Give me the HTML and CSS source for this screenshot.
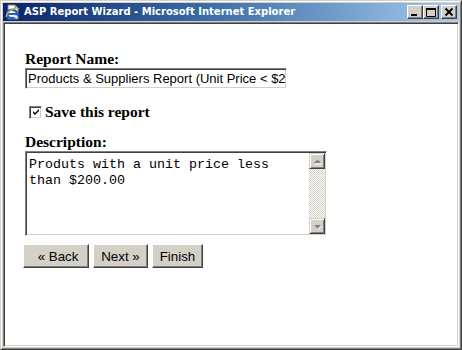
FILE: index.html
```html
<!DOCTYPE html>
<html>
<head>
<meta charset="utf-8">
<title>ASP Report Wizard</title>
<link rel="stylesheet" href="styles.css">
</head>
<body>
<div class="window">
  <div class="frame">
    <div class="titlebar">
      <svg class="ie-icon" width="16" height="16" viewBox="0 0 16 16">
        <path d="M3 1 H10 L13 4 V15 H3 Z" fill="#fff" stroke="#808080" stroke-width="1"/>
        <path d="M10 1 V4 H13" fill="#d4d0c8" stroke="#808080" stroke-width="1"/>
        <ellipse cx="7" cy="10" rx="5" ry="4.2" fill="none" stroke="#1c5fd0" stroke-width="2.4"/>
        <path d="M2.5 10 H11.5" stroke="#1c5fd0" stroke-width="2"/>
        <path d="M9 12.5 H12" stroke="#fff" stroke-width="2.2"/>
        <path d="M1 13 C3 6 10 3 14 5" fill="none" stroke="#f0b020" stroke-width="1.3"/>
      </svg>
      <span class="title">ASP Report Wizard - Microsoft Internet Explorer</span>
      <div class="caption-buttons">
        <span class="cbtn">
          <svg width="12" height="10" viewBox="0 0 12 10"><rect x="2" y="7" width="6" height="2" fill="#000"/></svg>
        </span>
        <span class="cbtn">
          <svg width="12" height="10" viewBox="0 0 12 10"><path d="M1.5 1.5 H10.5 V9.5 H1.5 Z" fill="none" stroke="#000" stroke-width="1"/><rect x="1" y="1" width="10" height="2" fill="#000"/></svg>
        </span>
        <span class="cbtn cbtn-close">
          <svg width="12" height="10" viewBox="0 0 12 10"><path d="M2.5 1.5 L9.5 8.5 M9.5 1.5 L2.5 8.5" stroke="#000" stroke-width="1.8"/></svg>
        </span>
      </div>
    </div>
    <div class="client">
      <div class="label">Report Name:</div>
      <div class="textbox">Products &amp; Suppliers Report (Unit Price &lt; $200.00)</div>
      <div class="check-row">
        <span class="checkbox">
          <svg width="9" height="9" viewBox="0 0 9 9"><path d="M1 3 L3 5 L7 1 L7 3 L3 7 L1 5 Z" fill="#000"/></svg>
        </span>
        <span class="label">Save this report</span>
      </div>
      <div class="label">Description:</div>
      <div class="textarea">
        <div class="ta-text">Produts with a unit price less<br>than $200.00</div>
        <div class="scrollbar">
          <span class="sb-btn">
            <svg width="12" height="12" viewBox="0 0 12 12"><path d="M3 8 L6.5 4.5 L10 8 Z" fill="#808080"/><path d="M4 9 H11" stroke="#fff" stroke-width="1"/></svg>
          </span>
          <span class="sb-track"></span>
          <span class="sb-btn">
            <svg width="12" height="12" viewBox="0 0 12 12"><path d="M3 5 L10 5 L6.5 8.5 Z" fill="#808080"/><path d="M7 9.5 L10.5 6" stroke="#fff" stroke-width="1"/></svg>
          </span>
        </div>
      </div>
      <div class="buttons">
        <button class="btn btn-back">&laquo; Back</button>
        <button class="btn btn-next">Next &raquo;</button>
        <button class="btn btn-finish">Finish</button>
      </div>
    </div>
  </div>
</div>
</body>
</html>
```
FILE: styles.css
```css
html, body {
  margin: 0;
  padding: 0;
  background: #d4d0c8;
}

.window {
  width: 462px;
  height: 350px;
  box-sizing: border-box;
  background: #d4d0c8;
  border: 1px solid;
  border-color: #d4d0c8 #404040 #404040 #d4d0c8;
}

.frame {
  height: 100%;
  box-sizing: border-box;
  border: 1px solid;
  border-color: #ffffff #808080 #808080 #ffffff;
  padding: 1px;
  display: flex;
  flex-direction: column;
}

.titlebar {
  height: 18px;
  flex: none;
  display: flex;
  align-items: center;
  padding: 0 2px 0 2px;
  background: linear-gradient(to right, #0a246a 0%, #3a6ea5 45%, #a6caf0 100%);
}

.ie-icon {
  flex: none;
  display: block;
}

.title {
  margin-left: 3px;
  color: #ffffff;
  font-family: "DejaVu Sans", Verdana, sans-serif;
  font-weight: bold;
  font-size: 10px;
  line-height: 14px;
  white-space: nowrap;
  flex: 1;
}

.caption-buttons {
  display: flex;
  align-items: center;
  flex: none;
}

.cbtn {
  width: 16px;
  height: 14px;
  box-sizing: border-box;
  background: #d4d0c8;
  border: 1px solid;
  border-color: #ffffff #404040 #404040 #ffffff;
  box-shadow: inset -1px -1px #808080;
  display: flex;
  align-items: center;
  justify-content: center;
}

.cbtn svg {
  display: block;
}

.cbtn-close {
  margin-left: 2px;
}

.client {
  flex: 1;
  margin-top: 1px;
  background: #ffffff;
  border: 1px solid;
  border-color: #808080 #ffffff #ffffff #808080;
  box-shadow: inset 1px 1px #404040, inset -1px -1px #d4d0c8;
  padding: 27px 20px 0 21px;
}

.label {
  font-family: "Liberation Serif", "Times New Roman", serif;
  font-weight: bold;
  font-size: 15.5px;
  line-height: 18px;
  color: #000;
}

.textbox {
  width: 262px;
  height: 21px;
  box-sizing: border-box;
  border: 1px solid;
  border-color: #808080 #ffffff #ffffff #808080;
  box-shadow: inset 1px 1px #404040, inset -1px -1px #d4d0c8;
  padding: 2px 0 0 2px;
  font-family: "Liberation Sans", Arial, sans-serif;
  font-size: 13px;
  line-height: 16px;
  white-space: nowrap;
  overflow: hidden;
  color: #000;
}

.check-row {
  display: flex;
  align-items: center;
  margin-top: 14px;
  padding-left: 4px;
}

.checkbox {
  width: 13px;
  height: 13px;
  box-sizing: border-box;
  background: #fff;
  border: 1px solid;
  border-color: #808080 #ffffff #ffffff #808080;
  box-shadow: inset 1px 1px #404040, inset -1px -1px #d4d0c8;
  display: flex;
  align-items: center;
  justify-content: center;
  margin-right: 3px;
}

.checkbox svg {
  display: block;
  margin: 1px 0 0 1px;
}

.check-row + .label {
  margin-top: 12px;
}

.textarea {
  width: 302px;
  height: 85px;
  box-sizing: border-box;
  border: 1px solid;
  border-color: #808080 #ffffff #ffffff #808080;
  box-shadow: inset 1px 1px #404040, inset -1px -1px #d4d0c8;
  padding: 1px;
  display: flex;
}

.ta-text {
  flex: 1;
  padding: 4px 0 0 2px;
  font-family: "Liberation Mono", "Courier New", monospace;
  font-size: 13.33px;
  line-height: 16px;
  color: #000;
}

.scrollbar {
  width: 16px;
  display: flex;
  flex-direction: column;
}

.sb-btn {
  width: 16px;
  height: 16px;
  box-sizing: border-box;
  background: #d4d0c8;
  border: 1px solid;
  border-color: #d4d0c8 #404040 #404040 #d4d0c8;
  box-shadow: inset 1px 1px #ffffff, inset -1px -1px #808080;
  display: flex;
  align-items: center;
  justify-content: center;
  flex: none;
}

.sb-btn svg {
  display: block;
}

.sb-track {
  flex: 1;
  background: repeating-conic-gradient(#ffffff 0 25%, #d4d0c8 0 50%) 0 0 / 2px 2px;
}

.buttons {
  display: flex;
  gap: 4px;
  margin-top: 8px;
  margin-left: -2px;
}

.btn {
  height: 24px;
  box-sizing: border-box;
  background: #d4d0c8;
  border: 1px solid;
  border-color: #ffffff #404040 #404040 #ffffff;
  box-shadow: inset -1px -1px #808080;
  font-family: "Liberation Sans", Arial, sans-serif;
  font-size: 13.33px;
  color: #000;
  padding: 0;
  margin: 0;
  border-radius: 0;
}

.btn-back {
  width: 66px;
  padding-left: 4px;
}

.btn-next {
  width: 55px;
}

.btn-finish {
  width: 51px;
}
```
